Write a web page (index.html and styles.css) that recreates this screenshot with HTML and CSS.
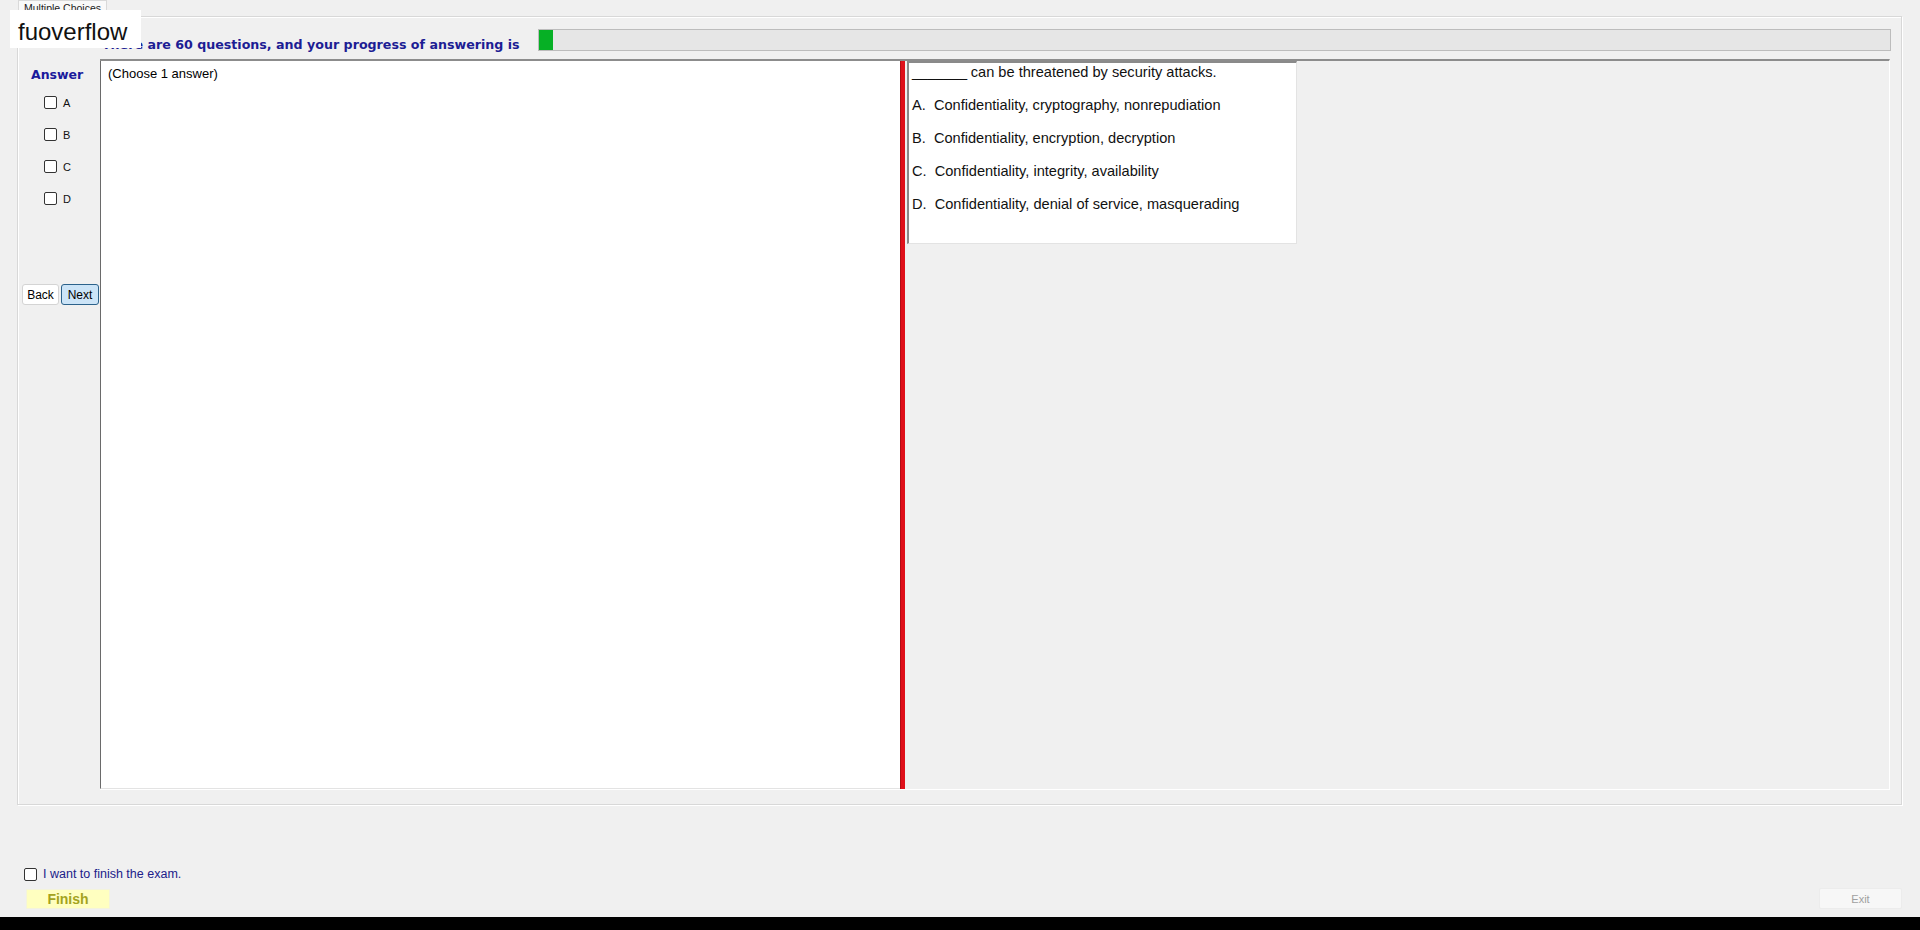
FILE: index.html
```html
<!DOCTYPE html>
<html lang="en">
<head>
  <meta charset="UTF-8" />
  <title>Multiple Choices</title>
  <link rel="stylesheet" href="styles.css">
</head>
<body>
  <div class="logo">fuoverflow</div>

  <div class="app">
    <div class="tabbar">
      <div class="tab">Multiple Choices</div>
    </div>

    <div class="group">
      <div class="progress-row">
        <span class="progress-text">There are 60 questions, and your progress of answering is</span>
        <div class="progress"><div class="progress-fill" style="width: 14px"></div></div>
      </div>

      <div class="main">
        <div class="sidebar">
          <div class="answer-title">Answer</div>
          <div class="opt"><span class="check"></span>A</div>
          <div class="opt"><span class="check"></span>B</div>
          <div class="opt"><span class="check"></span>C</div>
          <div class="opt"><span class="check"></span>D</div>
          <div class="nav">
            <button class="btn btn-back">Back</button>
            <button class="btn btn-next">Next</button>
          </div>
        </div>

        <div class="content">
          <div class="notes">(Choose 1 answer)</div>
          <div class="splitter"></div>
          <div class="question-area">
            <div class="question">
              <p><span class="blank">_______</span> can be threatened by security attacks.</p>
              <p>A.&nbsp; Confidentiality, cryptography, nonrepudiation</p>
              <p>B.&nbsp; Confidentiality, encryption, decryption</p>
              <p>C.&nbsp; Confidentiality, integrity, availability</p>
              <p>D.&nbsp; Confidentiality, denial of service, masquerading</p>
            </div>
          </div>
        </div>
      </div>
    </div>

    <div class="footer">
      <div class="finish-box">
        <div class="finish-check"><span class="check"></span>I want to finish the exam.</div>
        <button class="btn-finish">Finish</button>
      </div>
      <button class="btn-exit">Exit</button>
    </div>

    <div class="taskbar"></div>
  </div>
</body>
</html>
```

FILE: styles.css
```css
* {
  box-sizing: border-box;
}

body {
  margin: 0;
  background-color: #f0f0f0;
  font-family: "Liberation Sans", Arial, sans-serif;
  color: #000;
}

.logo {
  position: absolute;
  top: 10px;
  left: 10px;
  width: 131px;
  height: 38px;
  padding-left: 8px;
  background: #fff;
  font-size: 24px;
  line-height: 43px;
  color: #111;
  z-index: 2;
}

.app {
  height: 930px;
  display: flex;
  flex-direction: column;
}

.tabbar {
  height: 17px;
  padding-left: 18px;
  display: flex;
  align-items: flex-end;
  margin-bottom: -1px;
}

.tab {
  height: 17px;
  padding: 0 5px;
  background: #f9f9f9;
  border: 1px solid #d9d9d9;
  border-bottom: none;
  font-size: 10.5px;
  line-height: 15px;
  color: #222;
}

.group {
  height: 789px;
  margin: 0 18px 0 17px;
  border: 1px solid #d8d8d8;
  box-shadow: inset 1px 1px 0 #fff, 1px 1px 0 #fff;
  padding-top: 12px;
}

.progress-row {
  height: 22px;
  display: flex;
  align-items: flex-end;
}

.progress-text {
  margin-left: 84px;
  margin-bottom: -1px;
  font-family: "DejaVu Sans", Verdana, sans-serif;
  font-weight: bold;
  font-size: 12.65px;
  line-height: 15px;
  color: #1d1d94;
}

.progress {
  width: 1353px;
  height: 22px;
  margin-left: auto;
  margin-right: 10px;
  background: #e6e6e6;
  border: 1px solid #bcbcbc;
}

.progress-fill {
  height: 100%;
  background: #06b025;
}

.main {
  height: 731px;
  margin-top: 8px;
  display: flex;
}

.sidebar {
  width: 82px;
  padding-top: 9px;
  border-left: 1px solid #fff;
}

.answer-title {
  margin-left: 12px;
  font-family: "DejaVu Sans", Verdana, sans-serif;
  font-weight: bold;
  font-size: 12.5px;
  line-height: 14px;
  color: #1a1a9c;
  margin-bottom: 14px;
}

.opt {
  display: flex;
  align-items: center;
  height: 13px;
  margin-left: 25px;
  margin-bottom: 19px;
  font-size: 11px;
  color: #111;
}

.check {
  width: 13px;
  height: 13px;
  margin-right: 6px;
  background: #fff;
  border: 1px solid #333;
  border-radius: 2px;
}

.nav {
  display: flex;
  gap: 2px;
  margin-top: 79px;
  margin-left: 3px;
}

.btn {
  height: 21px;
  padding: 0;
  font-family: "Liberation Sans", Arial, sans-serif;
  font-size: 12px;
  color: #000;
  border-radius: 3px;
}

.btn-back {
  width: 37px;
  background: #fff;
  border: 1px solid #d4d4d4;
}

.btn-next {
  width: 38px;
  background: #cce4f7;
  border: 1px solid #2c628b;
}

.content {
  flex: 1;
  margin-right: 11px;
  display: flex;
  border-top: 2px solid #8c8c8c;
  border-right: 1px solid #fff;
  border-bottom: 1px solid #fff;
}

.notes {
  width: 800px;
  background: #fff;
  border-left: 1px solid #6a6a6a;
  border-bottom: 1px solid #e3e3e3;
  padding: 5px 0 0 7px;
  font-size: 13px;
  line-height: 15px;
}

.splitter {
  width: 5px;
  background: #e0101a;
  border-left: 1px solid #b00d14;
}

.question-area {
  flex: 1;
  padding-left: 2px;
}

.question {
  width: 390px;
  height: 183px;
  background: #fff;
  border-left: 2px solid #8a8a8a;
  border-top: 2px solid #8a8a8a;
  border-right: 1px solid #e3e3e3;
  border-bottom: 1px solid #e3e3e3;
  padding: 1px 0 0 3px;
  font-size: 14.6px;
  line-height: 17px;
  color: #111;
}

.question p {
  margin: 0 0 16px;
}

.blank {
  letter-spacing: -0.3px;
}

.footer {
  flex: 1;
  display: flex;
  justify-content: space-between;
  align-items: flex-end;
  padding: 0 18px 8px 24px;
}

.finish-check {
  display: flex;
  align-items: center;
  font-size: 12.5px;
  color: #20208a;
}

.btn-finish {
  width: 84px;
  height: 20px;
  margin: 8px 0 0 2px;
  padding: 0;
  background: #ffffc0;
  border: 1px solid #f4f4dc;
  font-family: "Liberation Sans", Arial, sans-serif;
  font-weight: bold;
  font-size: 14px;
  color: #a3a320;
}

.btn-exit {
  width: 83px;
  height: 21px;
  padding: 0;
  background: #f7f7f7;
  border: 1px solid #ececec;
  border-radius: 2px;
  font-family: "Liberation Sans", Arial, sans-serif;
  font-size: 11px;
  color: #a0a0a0;
}

.taskbar {
  height: 13px;
  background: #000;
}
```
